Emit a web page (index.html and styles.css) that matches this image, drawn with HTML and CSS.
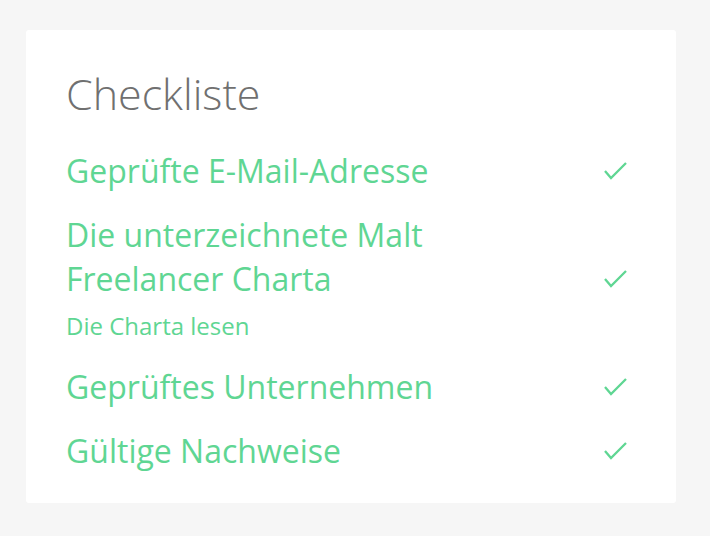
FILE: index.html
```html
<!DOCTYPE html>
<html>
<head>
<meta charset="utf-8">
<title>Checkliste</title>
<link rel="stylesheet" href="styles.css">
</head>
<body>
<div class="card">
    <h2 class="card-title">Checkliste</h2>
    <ul class="checklist">
        <li class="check-item">
            <div class="check-text">
                <span class="check-label">Geprüfte E-Mail-Adresse</span>
            </div>
            <svg class="check-icon" viewBox="0 0 24 20"><polyline points="2,10 8,17 23,2"/></svg>
        </li>
        <li class="check-item">
            <div class="check-text">
                <span class="check-label">Die unterzeichnete Malt Freelancer Charta</span>
                <a class="check-link" href="#">Die Charta lesen</a>
            </div>
            <svg class="check-icon" viewBox="0 0 24 20"><polyline points="2,10 8,17 23,2"/></svg>
        </li>
        <li class="check-item">
            <div class="check-text">
                <span class="check-label">Geprüftes Unternehmen</span>
            </div>
            <svg class="check-icon" viewBox="0 0 24 20"><polyline points="2,10 8,17 23,2"/></svg>
        </li>
        <li class="check-item">
            <div class="check-text">
                <span class="check-label">Gültige Nachweise</span>
            </div>
            <svg class="check-icon" viewBox="0 0 24 20"><polyline points="2,10 8,17 23,2"/></svg>
        </li>
    </ul>
</div>
</body>
</html>
```

FILE: styles.css
```css
/* global */
body {
    margin: 0;
    padding: 30px 34px 35px 26px;
    background-color: #f6f6f6;
    font-family: 'Open Sans', sans-serif;
}

.card {
    background: #fff;
    border-radius: 3px;
    padding: 35px 49px 30px 40px;
}

.card-title {
    margin: 0 0 26px;
    font-size: 43px;
    font-weight: 300;
    color: #707070;
    line-height: 58px;
}

/* list */
.checklist {
    list-style: none;
    margin: 0;
    padding: 0;
    display: flex;
    flex-direction: column;
    gap: 19.5px;
}

.check-item {
    display: flex;
    align-items: center;
    justify-content: space-between;
}

.check-text {
    display: flex;
    flex-direction: column;
    max-width: 400px;
}

.check-label {
    font-size: 32px;
    line-height: 44px;
    color: #5fd693;
}

.check-link {
    margin: 7px 0 2px;
    font-size: 24px;
    line-height: 36px;
    color: #5fd693;
    text-decoration: none;
}

.check-icon {
    width: 24px;
    height: 20px;
    fill: none;
    stroke: #5fd693;
    stroke-width: 2.3;
}
```
